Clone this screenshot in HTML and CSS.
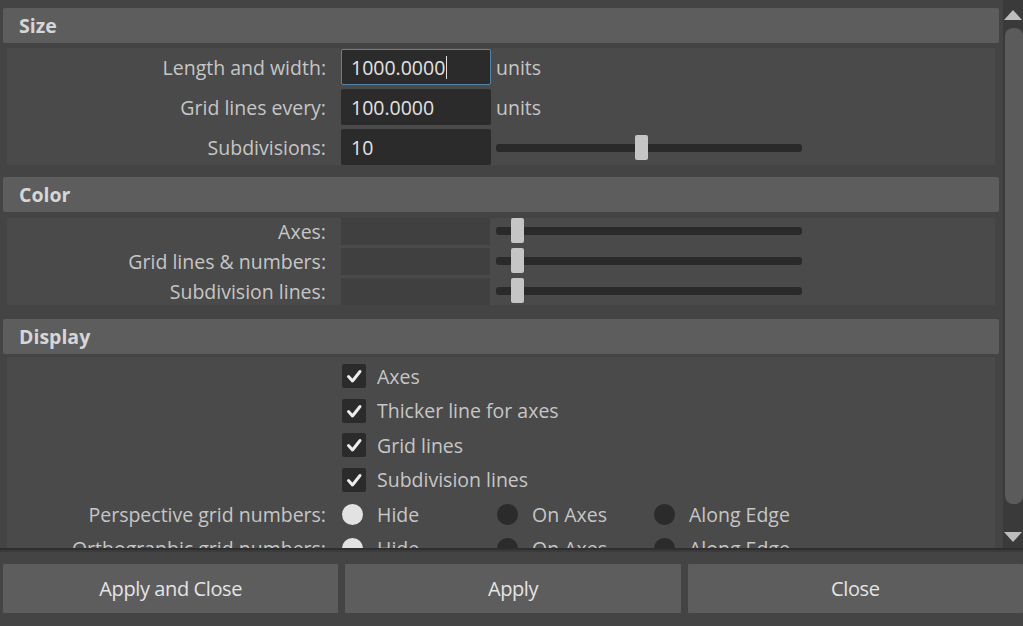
FILE: index.html
```html
<!DOCTYPE html>
<html>
<head>
<meta charset="utf-8">
<link rel="stylesheet" href="styles.css">
</head>
<body>
<div class="window">
  <div class="scrollarea">
    <div class="content">
      <section class="group">
        <div class="group-header">Size</div>
        <div class="group-body form size-form">
          <div class="lbl">Length and width:</div>
          <div class="field focused">1000.0000<span class="caret"></span></div>
          <div class="extra">units</div>

          <div class="lbl">Grid lines every:</div>
          <div class="field">100.0000</div>
          <div class="extra">units</div>

          <div class="lbl">Subdivisions:</div>
          <div class="field">10</div>
          <div class="extra"><div class="slider"><div class="track"></div><div class="handle" style="left: 139px"></div></div></div>
        </div>
      </section>

      <section class="group color-group">
        <div class="group-header">Color</div>
        <div class="group-body form color-form">
          <div class="lbl">Axes:</div>
          <div class="swatch"></div>
          <div class="extra"><div class="slider"><div class="track"></div><div class="handle" style="left: 15px"></div></div></div>

          <div class="lbl">Grid lines &amp; numbers:</div>
          <div class="swatch"></div>
          <div class="extra"><div class="slider"><div class="track"></div><div class="handle" style="left: 15px"></div></div></div>

          <div class="lbl">Subdivision lines:</div>
          <div class="swatch"></div>
          <div class="extra"><div class="slider"><div class="track"></div><div class="handle" style="left: 15px"></div></div></div>
        </div>
      </section>

      <section class="group display-group">
        <div class="group-header">Display</div>
        <div class="group-body display-form">
          <div class="drow"><div class="lbl"></div><div class="check"><span class="box"><svg viewBox="0 0 24 24" width="24" height="24"><path d="M6.5 12.5 L10.5 17 L18 7.5" fill="none" stroke="#ececec" stroke-width="3" stroke-linecap="round" stroke-linejoin="round"/></svg></span><span class="ctext">Axes</span></div></div>
          <div class="drow"><div class="lbl"></div><div class="check"><span class="box"><svg viewBox="0 0 24 24" width="24" height="24"><path d="M6.5 12.5 L10.5 17 L18 7.5" fill="none" stroke="#ececec" stroke-width="3" stroke-linecap="round" stroke-linejoin="round"/></svg></span><span class="ctext">Thicker line for axes</span></div></div>
          <div class="drow"><div class="lbl"></div><div class="check"><span class="box"><svg viewBox="0 0 24 24" width="24" height="24"><path d="M6.5 12.5 L10.5 17 L18 7.5" fill="none" stroke="#ececec" stroke-width="3" stroke-linecap="round" stroke-linejoin="round"/></svg></span><span class="ctext">Grid lines</span></div></div>
          <div class="drow"><div class="lbl"></div><div class="check"><span class="box"><svg viewBox="0 0 24 24" width="24" height="24"><path d="M6.5 12.5 L10.5 17 L18 7.5" fill="none" stroke="#ececec" stroke-width="3" stroke-linecap="round" stroke-linejoin="round"/></svg></span><span class="ctext">Subdivision lines</span></div></div>
          <div class="drow"><div class="lbl">Perspective grid numbers:</div>
            <div class="radios">
              <div class="radio"><span class="dot on"></span><span class="rtext">Hide</span></div>
              <div class="radio"><span class="dot"></span><span class="rtext">On Axes</span></div>
              <div class="radio"><span class="dot"></span><span class="rtext">Along Edge</span></div>
            </div>
          </div>
          <div class="drow"><div class="lbl">Orthographic grid numbers:</div>
            <div class="radios">
              <div class="radio"><span class="dot on"></span><span class="rtext">Hide</span></div>
              <div class="radio"><span class="dot"></span><span class="rtext">On Axes</span></div>
              <div class="radio"><span class="dot"></span><span class="rtext">Along Edge</span></div>
            </div>
          </div>
        </div>
      </section>
    </div>
    <div class="scrollbar">
      <div class="arrow up"></div>
      <div class="sb-track"><div class="thumb"></div></div>
      <div class="arrow down"></div>
    </div>
  </div>
  <div class="footer">
    <button class="btn">Apply and Close</button>
    <button class="btn">Apply</button>
    <button class="btn">Close</button>
  </div>
</div>
</body>
</html>
```

FILE: styles.css
```css
* { box-sizing: border-box; }
html, body {
  margin: 0;
  padding: 0;
  background: #444444;
  width: 1023px;
  height: 626px;
  overflow: hidden;
  font-family: "Open Sans", "Noto Sans", sans-serif;
  color: #c9c9c9;
}
.window {
  display: flex;
  flex-direction: column;
  height: 626px;
}
.scrollarea {
  height: 548px;
  display: flex;
  overflow: hidden;
}
.content {
  width: 1003px;
  padding: 8px 4px 0 3px;
  overflow: hidden;
}
.group-header {
  height: 35px;
  background: #5d5d5d;
  border-radius: 2px;
  font-weight: 700;
  font-size: 19.5px;
  color: #d6d6d6;
  padding-left: 16px;
  display: flex;
  align-items: center;
}
.group-body {
  margin: 5px 4px 0 4px;
  background: #4a4a4a;
}
.form {
  display: grid;
  grid-template-columns: 319px 150px 1fr;
  column-gap: 15px;
  align-items: center;
}
.size-form {
  padding: 1px 0 0 0;
  row-gap: 4px;
  grid-auto-rows: 36px;
}
.lbl {
  text-align: right;
  font-size: 19.5px;
  color: #c6c6c6;
  white-space: nowrap;
}
.field {
  height: 36px;
  background: #2b2b2b;
  border-radius: 2px;
  color: #e2e2e2;
  font-size: 19.5px;
  padding-left: 9px;
  display: flex;
  align-items: center;
  border: 1px solid #2b2b2b;
}
.field.focused {
  border-color: #5284a8;
}
.caret {
  display: inline-block;
  width: 1px;
  height: 23px;
  background: #e0e0e0;
  margin-left: 1px;
}
.extra {
  margin-left: -10px;
  font-size: 19.5px;
  color: #c6c6c6;
  height: 100%;
  display: flex;
  align-items: center;
}
.slider {
  position: relative;
  width: 306px;
  height: 25px;
}
.track {
  position: absolute;
  left: 0;
  right: 0;
  top: 9px;
  height: 8px;
  background: #2a2a2a;
  border-radius: 3px;
}
.handle {
  position: absolute;
  top: 0;
  width: 13px;
  height: 25px;
  background: #c5c5c5;
  border-radius: 2px;
}
.color-group { margin-top: 12px; }
.color-group .group-body { margin-top: 6px; }
.color-form {
  row-gap: 3px;
  grid-auto-rows: 27px;
}
.color-form .lbl { align-self: end; line-height: 27px; }
.swatch {
  height: 27px;
  background: #404040;
  margin-right: 1px;
}
.color-form .slider { margin-top: -3px; }
.display-group { margin-top: 14px; }
.display-group .group-body {
  margin-top: 3px;
  padding-top: 2px;
  height: 200px;
}
.drow {
  display: grid;
  grid-template-columns: 319px 1fr;
  column-gap: 16px;
  align-items: center;
  height: 34.5px;
}
.check {
  display: flex;
  align-items: center;
}
.box {
  width: 24px;
  height: 24px;
  background: #2b2b2b;
  border-radius: 2px;
  display: flex;
}
.ctext, .rtext {
  font-size: 19.5px;
  color: #c6c6c6;
  margin-left: 11px;
}
.radios {
  display: grid;
  grid-template-columns: 155px 157px auto;
  align-items: center;
}
.radio {
  display: flex;
  align-items: center;
}
.dot {
  width: 21px;
  height: 21px;
  border-radius: 50%;
  background: #2b2b2b;
}
.dot.on { background: #e2e2e2; }
.rtext { margin-left: 14px; }

.scrollbar {
  width: 20px;
  background: #3a3a3a;
  display: flex;
  flex-direction: column;
  align-items: center;
}
.arrow {
  width: 0;
  height: 0;
  border-left: 9px solid transparent;
  border-right: 9px solid transparent;
}
.arrow.up {
  margin-top: 10px;
  border-bottom: 10px solid #bdbdbd;
}
.arrow.down {
  margin-top: 4px;
  margin-bottom: 6px;
  border-top: 10px solid #bdbdbd;
}
.sb-track {
  flex: 1;
  width: 100%;
  padding: 8px 0 24px 2px;
  display: flex;
}
.thumb {
  flex: 1;
  background: #5b5b5b;
  border-radius: 8px;
}

.footer {
  flex: 1;
  border-top: 2px solid #2f2f2f;
  box-shadow: inset 0 2px 0 #3b3b3b;
  padding: 14px 0 0 3px;
  display: flex;
  gap: 7px;
  align-items: flex-start;
}
.btn {
  flex: 1;
  height: 49px;
  background: #5d5d5d;
  border: 0;
  border-radius: 1px;
  color: #e4e4e4;
  font-family: "Open Sans", "Noto Sans", sans-serif;
  font-size: 20px;
  letter-spacing: -0.4px;
  padding: 0;
}
```
